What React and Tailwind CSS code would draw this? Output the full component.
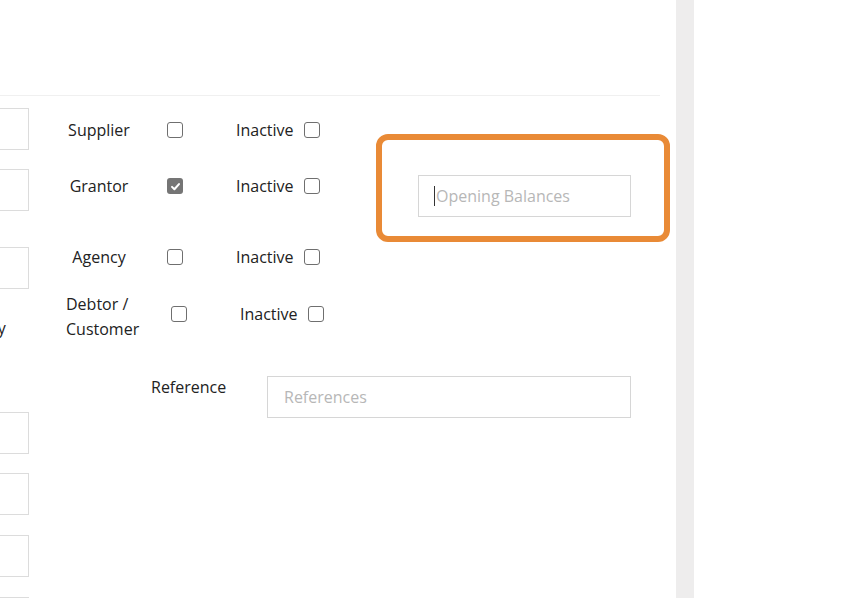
import React from "react";

function Box({ checked }) {
  return checked ? (
    <span className="flex h-[16px] w-[16px] shrink-0 items-center justify-center rounded-[3px] bg-[#757575]">
      <svg width="11" height="11" viewBox="0 0 12 12" fill="none">
        <path d="M2.2 6.4l2.6 2.6 5-5.6" stroke="#fff" strokeWidth="2.2" strokeLinecap="round" strokeLinejoin="round" />
      </svg>
    </span>
  ) : (
    <span className="block h-[16px] w-[16px] shrink-0 rounded-[3px] border border-[#6f6f6f] bg-white" />
  );
}

function RoleRow({ label, checked, h }) {
  return (
    <div className={`flex items-center ${h}`}>
      <div className="ml-[30px] w-[80px] text-center">{label}</div>
      <div className="ml-[28px]"><Box checked={checked} /></div>
      <div className="ml-[53px] w-[59px]">Inactive</div>
      <div className="ml-[9px]"><Box /></div>
    </div>
  );
}

export default function App() {
  return (
    <div
      className="flex h-[598px] w-[860px] overflow-hidden bg-white text-[16px] text-[#222]"
      style={{ fontFamily: '"Open Sans", "Liberation Sans", sans-serif' }}
    >
      <div className="flex w-[676px] flex-col">
        <div className="mr-[16px] h-[96px] shrink-0 border-b border-[#f0f0f0]" />

        <div className="flex">
          {/* left column of inputs, cut off at the edge */}
          <div className="flex w-[29px] shrink-0 flex-col">
            <div className="mt-[12px] h-[42px] border border-l-0 border-[#dcdcdc]" />
            <div className="mt-[19px] h-[42px] border border-l-0 border-[#dcdcdc]" />
            <div className="mt-[36px] h-[42px] border border-l-0 border-[#dcdcdc]" />
            <div className="-ml-[12px] mt-[28px] leading-[22px]">ny</div>
            <div className="mt-[73px] h-[42px] border border-l-0 border-[#dcdcdc]" />
            <div className="mt-[19px] h-[42px] border border-l-0 border-[#dcdcdc]" />
            <div className="mt-[20px] h-[42px] border border-l-0 border-[#dcdcdc]" />
            <div className="mt-[20px] h-[42px] border border-l-0 border-[#dcdcdc]" />
          </div>

          <div className="flex flex-col">
            <div className="flex">
              <div className="flex w-[347px] shrink-0 flex-col">
                <RoleRow label="Supplier" h="mt-[14px] h-[40px]" />
                <RoleRow label="Grantor" checked h="mt-[16px] h-[40px]" />
                <RoleRow label="Agency" h="mt-[31px] h-[40px]" />
                <div className="mt-[18px] flex h-[44px] items-center">
                  <div className="ml-[37px] w-[80px] leading-[25px]">
                    Debtor /<br />Customer
                  </div>
                  <div className="-mt-[6px] ml-[25px]"><Box /></div>
                  <div className="-mt-[6px] ml-[53px] w-[59px]">Inactive</div>
                  <div className="-mt-[6px] ml-[9px]"><Box /></div>
                </div>
              </div>

              <div className="mt-[38px] h-[108px] w-[294px] shrink-0 rounded-[12px] border-[6px] border-[#e98a36] pl-[36px] pt-[35px]">
                <div className="flex h-[42px] w-[213px] items-center border border-[#d6d6d6] pl-[15px] text-[#b7b7b7]">
                  <span className="mr-[1px] h-[20px] w-[1px] bg-[#333]" />
                  Opening Balances
                </div>
              </div>
            </div>

            <div className="mt-[37px] flex items-start">
              <div className="ml-[122px] w-[78px] leading-[22px]">Reference</div>
              <div className="ml-[38px] flex h-[42px] w-[364px] items-center border border-[#d6d6d6] pl-[16px] text-[#b7b7b7]">
                References
              </div>
            </div>
          </div>
        </div>
      </div>

      <div className="w-[18px] shrink-0 bg-[#eeeded]" />
      <div className="flex-1 bg-white" />
    </div>
  );
}
